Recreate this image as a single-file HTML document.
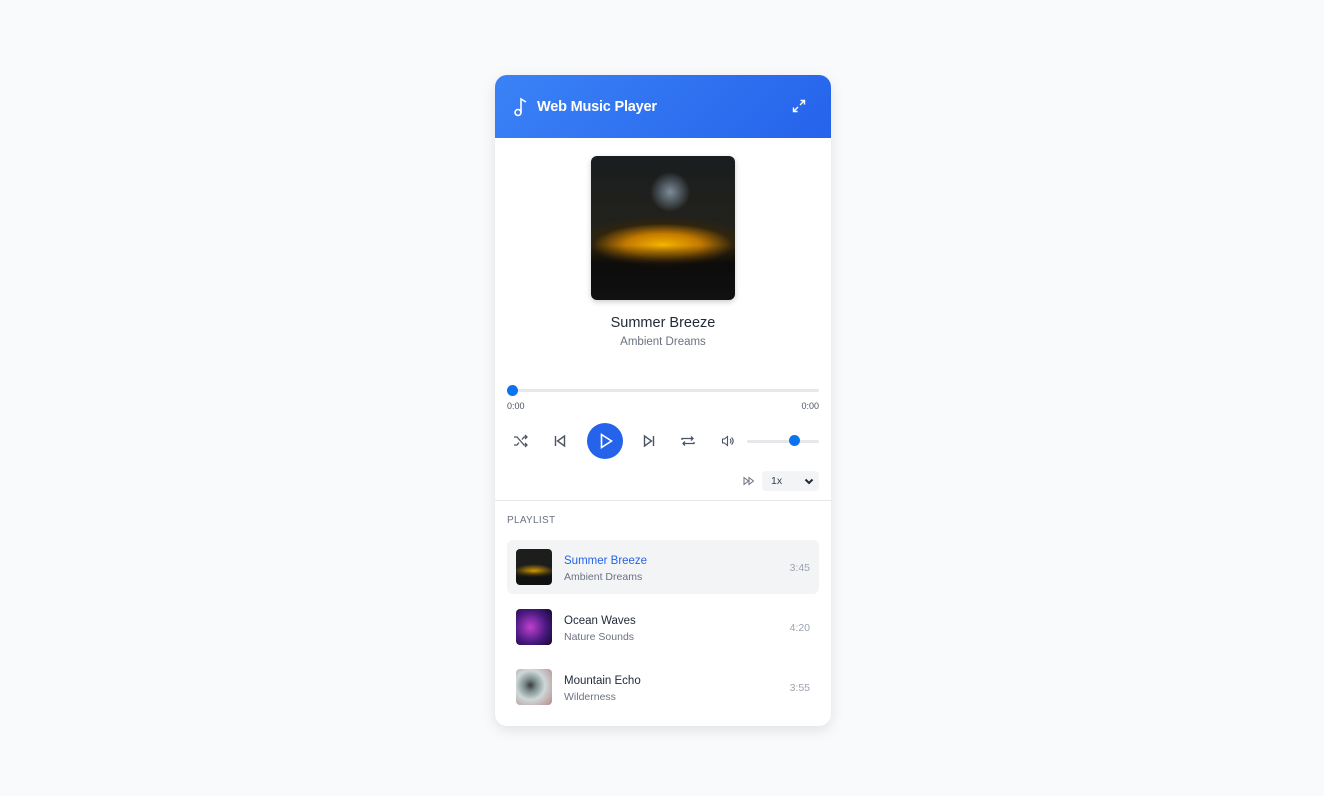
<!DOCTYPE html>
<html><head><style>
*{box-sizing:border-box;margin:0;padding:0}
body{width:1324px;height:796px;background:#f8fafc;font-family:"Liberation Sans",sans-serif;position:relative;overflow:hidden}
.card{position:absolute;left:495px;top:75px;width:336px;height:651px;background:#fff;border-radius:12px;box-shadow:0 4px 14px rgba(0,0,0,.1);overflow:hidden}
.hdr{height:63px;background:linear-gradient(135deg,#3b82f6,#2563eb);position:relative;color:#fff}
.hdr .t{position:absolute;left:42px;top:24px;font-size:14.5px;font-weight:bold;letter-spacing:-.2px}
.abs{position:absolute}
.art{left:96px;top:81px;width:144px;height:144px;border-radius:6px;background:linear-gradient(transparent 62%,rgba(10,10,10,.85) 75%,#111 100%),radial-gradient(ellipse 65% 20% at 50% 62%,#f7b500 0%,#c47a00 40%,rgba(60,40,0,.5) 75%,transparent 100%),radial-gradient(circle at 55% 25%,rgba(200,230,255,.55) 0,transparent 15%),linear-gradient(#1a1d1f,#23221c 55%,#141414 80%,#0c0c0c);box-shadow:0 2px 6px rgba(0,0,0,.2)}
.c{text-align:center;width:336px;left:0}
.bar{height:3px;background:#e5e7eb;border-radius:2px}
.dot{width:11px;height:11px;border-radius:50%;background:#0a74f0}
.sm{font-size:9px;color:#4b5563}
.item{left:12px;width:312px;height:54px;border-radius:6px}
.th{position:absolute;left:9px;top:9px;width:36px;height:36px;border-radius:4px}
.n{position:absolute;left:57px;top:15px;font-size:11.5px;color:#1f2937}
.a{position:absolute;left:57px;top:31px;font-size:10.5px;color:#6b7280}
.d{position:absolute;right:9px;top:22px;font-size:10.5px;color:#9ca3af}
svg{position:absolute}
</style></head><body>
<div class="card">
 <div class="hdr">
  <svg style="left:18px;top:22px" width="16" height="20" viewBox="0 0 16 20" fill="none" stroke="#fff" stroke-width="1.6"><circle cx="5" cy="15.5" r="3"/><path d="M8 15.5V2l5 3"/></svg>
  <div class="t">Web Music Player</div>
  <svg style="left:297px;top:24px" width="14" height="14" viewBox="0 0 14 14" fill="none" stroke="#fff" stroke-width="1.4"><path d="M8.5 1.5H12.5V5.5M12.5 1.5L8 6M5.5 12.5H1.5V8.5M1.5 12.5L6 8"/></svg>
 </div>
 <div class="abs art"></div>
 <div class="abs c" style="top:240px;font-size:14.5px;color:#1f2937">Summer Breeze</div>
 <div class="abs c" style="top:261px;font-size:11.5px;color:#6b7280">Ambient Dreams</div>
 <div class="abs bar" style="left:12px;top:314px;width:312px"></div>
 <div class="abs dot" style="left:12px;top:310px"></div>
 <div class="abs sm" style="left:12px;top:326px">0:00</div>
 <div class="abs sm" style="right:12px;top:326px">0:00</div>
 <svg style="left:18px;top:359px" width="16" height="14" viewBox="0 0 16 14" fill="none" stroke="#4b5563" stroke-width="1.3"><path d="M1 3h3l7 8h3M1 11h3l2-2.5M9 5.5L11 3h3M12 1l2 2-2 2M12 9l2 2-2 2"/></svg>
 <svg style="left:58px;top:359px" width="14" height="14" viewBox="0 0 14 14" fill="none" stroke="#4b5563" stroke-width="1.4"><path d="M2.5 2v10M11.5 2L4.5 7l7 5z"/></svg>
 <div class="abs" style="left:92px;top:348px;width:36px;height:36px;border-radius:50%;background:#2563eb"></div>
 <svg style="left:102px;top:357px" width="18" height="18" viewBox="0 0 18 18" fill="none" stroke="#fff" stroke-width="1.6"><path d="M4.5 2.5l10 6.5-10 6.5z"/></svg>
 <svg style="left:147px;top:359px" width="14" height="14" viewBox="0 0 14 14" fill="none" stroke="#4b5563" stroke-width="1.4"><path d="M11.5 2v10M2.5 2l7 5-7 5z"/></svg>
 <svg style="left:185px;top:359px" width="16" height="14" viewBox="0 0 16 14" fill="none" stroke="#4b5563" stroke-width="1.3"><path d="M2 6V4.5h11M11 2.5l2 2-2 2M14 8v1.5H3M5 11.5l-2-2 2-2"/></svg>
 <svg style="left:226px;top:360px" width="14" height="12" viewBox="0 0 14 12" fill="none" stroke="#4b5563" stroke-width="1.1"><path d="M1.5 4h2l3-2.5v9l-3-2.5h-2zM9 4a2.5 2.5 0 0 1 0 4M10.5 2.5a4.5 4.5 0 0 1 0 7"/></svg>
 <div class="abs bar" style="left:252px;top:365px;width:72px"></div>
 <div class="abs dot" style="left:294px;top:360px"></div>
 <svg style="left:248px;top:401px" width="12" height="10" viewBox="0 0 12 10" fill="none" stroke="#6b7280" stroke-width="1"><path d="M1 1.5l4.5 3.5L1 8.5zM6 1.5l4.5 3.5L6 8.5z"/></svg>
 <div class="abs" style="left:267px;top:396px;width:57px;height:20px;border-radius:4px;background:#f3f4f6;font-size:10.5px;color:#374151;padding:4px 0 0 9px">1x</div>
 <svg style="left:309px;top:403px" width="10" height="7" viewBox="0 0 10 7" fill="none" stroke="#1f2937" stroke-width="2"><path d="M1.5 1.5L5 5l3.5-3.5"/></svg>
 <div class="abs" style="left:0;top:425px;width:336px;height:1px;background:#e5e7eb"></div>
 <div class="abs" style="left:12px;top:440px;font-size:10px;color:#6b7280;letter-spacing:.3px">PLAYLIST</div>
 <div class="abs item" style="top:465px;background:#f3f4f6">
  <div class="th" style="background:linear-gradient(transparent 60%,#111 80%),radial-gradient(ellipse 70% 25% at 50% 62%,#e0a000,transparent 80%),#1d1d1b"></div>
  <div class="n" style="color:#2563eb">Summer Breeze</div><div class="a">Ambient Dreams</div><div class="d">3:45</div></div>
 <div class="abs item" style="top:525px">
  <div class="th" style="background:radial-gradient(circle at 40% 50%,#c040d0,#4a1a80 55%,#150830)"></div>
  <div class="n">Ocean Waves</div><div class="a">Nature Sounds</div><div class="d">4:20</div></div>
 <div class="abs item" style="top:585px">
  <div class="th" style="background:radial-gradient(circle at 40% 45%,#3a3a3a 0,#7a8a8a 20%,#cfd8d8 50%,#b89a9a 90%)"></div>
  <div class="n">Mountain Echo</div><div class="a">Wilderness</div><div class="d">3:55</div></div>
</div>
</body></html>
